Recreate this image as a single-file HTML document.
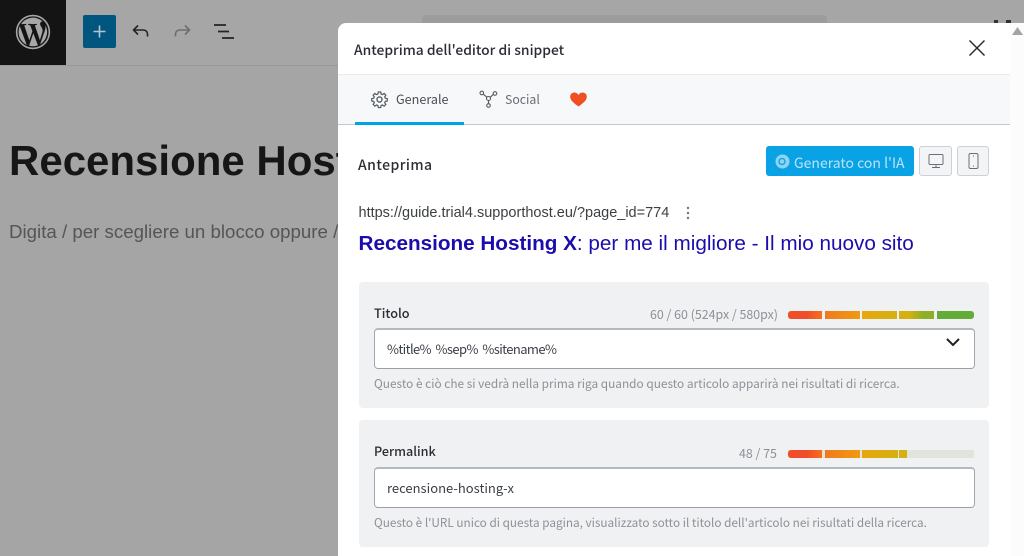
<!DOCTYPE html>
<html><head><meta charset="utf-8"><style>
html,body{margin:0;padding:0}
body{width:1024px;height:556px;overflow:hidden;position:relative;background:#a5a5a5;font-family:"Liberation Sans",sans-serif}
.a{position:absolute;white-space:nowrap}
.n{font-family:"Noto Sans CJK SC","Liberation Sans",sans-serif}
.box{position:absolute;background:#f0f1f3;border-radius:4px;left:359px;width:630px}
.inp{position:absolute;left:374px;width:601px;background:#fff;border:1px solid #a2a7ae;border-top-width:2px;border-color:#b4b8bf #a2a7ae #9a9fa6;border-radius:4px;box-sizing:border-box}
.seg{position:absolute;height:8px}
</style></head><body>
<div class="a" style="left:0;top:0;width:1024px;height:65px;background:#a6a6a6;border-bottom:1px solid #999"></div>
<div class="a" style="left:0;top:0;width:66px;height:65px;background:#141414"></div>
<svg class="a" style="left:15px;top:14px" width="36" height="36" viewBox="0 0 36 36"><circle cx="18" cy="18" r="16.4" fill="none" stroke="#a6a6a6" stroke-width="1.6"/><path d="M3.6 18c0 5.7 3.3 10.6 8.1 12.9L4.8 12.1A14.4 14.4 0 0 0 3.6 18zM27.7 17.3c0-1.8-.6-3-1.2-4-.7-1.200-1.400-2.200-1.400-3.400 0-1.300 1-2.500 2.400-2.500h.2A14.400 14.400 0 0 0 6 10.100h.9c1.500 0 3.800-.2 3.800-.2.800 0 .9 1.100.1 1.200 0 0-.8.100-1.600.1l5.100 15.200 3.100-9.200-2.200-6c-.8 0-1.500-.1-1.500-.1-.8 0-.7-1.200.1-1.200 0 0 2.300.2 3.700.2 1.500 0 3.800-.2 3.800-.2.800 0 .9 1.100.1 1.200 0 0-.8.100-1.600.1l5.100 15.100 1.400-4.700c.6-1.900 1.100-3.300 1.100-4.300zM18.300 19.300l-4.200 12.300a14.400 14.400 0 0 0 8.900-.2l-.1-.2zM30.400 11.300c.1.500.1 1 .1 1.500 0 1.500-.3 3.100-1.100 5.100l-4.300 12.500A14.400 14.400 0 0 0 30.400 11.300z" fill="#a6a6a6"/></svg>
<div class="a" style="left:83px;top:15px;width:33px;height:33px;background:#00567f;border-radius:2px"></div>
<svg class="a" style="left:83px;top:15px" width="33" height="33"><path d="M16.500 10.500v12M10.500 16.500h12" stroke="#b5c5cf" stroke-width="1.600"/></svg>
<svg class="a" style="left:130px;top:20px" width="22" height="22" fill="none" stroke="#242424" stroke-width="1.600"><path d="M17.500 16.500v-2.500a4 4 0 0 0-4-4H4M8 5.500L3.500 10 8 14.500"/></svg>
<svg class="a" style="left:171px;top:20px" width="22" height="22" fill="none" stroke="#6e6e6e" stroke-width="1.600"><path d="M4.500 16.500v-2.500a4 4 0 0 1 4-4H18M14 5.500L18.500 10 14 14.500"/></svg>
<svg class="a" style="left:213px;top:23px" width="22" height="16" stroke="#242424" stroke-width="1.700"><path d="M1 2h12M5 8.500h11M9 15h12"/></svg>
<div class="a" style="left:422px;top:15px;width:405px;height:33px;background:#9c9c9c;border-radius:4px"></div>
<div class="a" style="left:994px;top:20px;width:4px;height:3px;background:#333"></div>
<div class="a" style="left:1006px;top:20px;width:5px;height:3px;background:#333"></div>
<div class="a" style="left:9px;top:138px;font-size:42px;font-weight:700;color:#161616;line-height:46px">Recensione Hosting X</div>
<div class="a" style="left:9px;top:220px;font-size:18.700px;color:#555;line-height:24px">Digita / per scegliere un blocco oppure / per aggiungere</div>

<div class="a" style="left:338px;top:23px;width:686px;height:533px;background:#fff;border-radius:8px 0 0 0;overflow:hidden"></div>
<div class="a" style="left:1010px;top:23px;width:14px;height:533px;background:#fcfcfc"></div>
<svg class="a" style="left:1012px;top:27px" width="11" height="9"><path d="M5.500 0L11 8H0z" fill="#a3a3a3"/></svg>

<div class="a n" style="left:354px;top:39px;font-size:13.850px;font-weight:500;color:#2a2d33;line-height:21px">Anteprima dell'editor di snippet</div>
<svg class="a" style="left:968px;top:39px" width="18" height="18" stroke="#2a2d33" stroke-width="1.500"><path d="M1.500 1.500l15 15M16.500 1.500l-15 15"/></svg>

<div class="a" style="left:338px;top:74px;width:672px;height:49px;background:#f7f8f9;border-top:1px solid #e9ebee;border-bottom:1px solid #c3c8cf;box-sizing:content-box"></div>
<div class="a" style="left:355px;top:122px;width:109px;height:3px;background:#00a3e8"></div>
<svg class="a" style="left:370px;top:90px" width="19" height="19" viewBox="0 0 24 24" fill="none" stroke="#555b63" stroke-width="1.700"><circle cx="12" cy="12" r="3.200"/><path d="M10.300 2.500h3.400l.5 2.800 1.900.8 2.400-1.600 2.400 2.400-1.600 2.400.8 1.900 2.800.5v3.400l-2.800.5-.8 1.900 1.600 2.400-2.400 2.400-2.400-1.600-1.900.8-.5 2.800h-3.400l-.5-2.800-1.900-.8-2.400 1.600-2.400-2.400 1.600-2.400-.8-1.900-2.800-.5v-3.400l2.800-.5.8-1.900-1.600-2.400 2.400-2.400 2.400 1.600 1.900-.8z" transform="translate(12 12) scale(.9) translate(-12 -13)"/></svg>
<div class="a n" style="left:396px;top:89px;font-size:12.600px;color:#4a4f57;line-height:20px">Generale</div>
<svg class="a" style="left:479px;top:90px" width="19" height="19" fill="none" stroke="#555b63" stroke-width="1.100"><circle cx="2.800" cy="3" r="1.800"/><circle cx="16" cy="3.500" r="1.800"/><circle cx="9.500" cy="15.500" r="1.800"/><circle cx="9.500" cy="8.500" r="2"/><path d="M4.300 4.200l3.600 3M14.400 4.300l-3.200 3M9.500 10.500v3.200"/></svg>
<div class="a n" style="left:505px;top:89px;font-size:12.300px;color:#6a6f77;line-height:20px">Social</div>
<svg class="a" style="left:570px;top:92px" width="17" height="15" viewBox="0 0 17 15"><path d="M8.500 14.500C3 10.500.2 8 .2 4.700.2 2.300 2 .5 4.300.5 6 .5 7.600 1.400 8.500 3c.9-1.600 2.500-2.500 4.200-2.500 2.300 0 4.100 1.800 4.100 4.200 0 3.300-2.800 5.800-8.300 9.800z" fill="#f04e23"/></svg>

<div class="a n" style="left:358px;top:155px;font-size:14px;font-weight:500;color:#2a2d33;line-height:20px;letter-spacing:.45px">Anteprima</div>
<div class="a" style="left:766px;top:146px;width:148px;height:30px;background:#08a2e5;border-radius:3px"></div>
<svg class="a" style="left:775px;top:154px" width="15" height="15"><circle cx="7.500" cy="7.500" r="7" fill="#8fd3f2"/><circle cx="7" cy="7.500" r="3" fill="none" stroke="#08a2e5" stroke-width="1.300"/></svg>
<div class="a n" style="left:794px;top:153px;font-size:14px;color:#b9e4f8;line-height:21px">Generato con l'IA</div>
<div class="a" style="left:919px;top:146px;width:33px;height:30px;box-sizing:border-box;background:#f3f4f6;border:1px solid #ccd0d8;border-radius:3px"></div>
<svg class="a" style="left:928px;top:154px" width="16" height="14" fill="none" stroke="#6a6f77" stroke-width="1"><rect x="1" y=".5" width="14" height="10" rx="1"/><path d="M8 10.500v3M4 13.500h8"/></svg>
<div class="a" style="left:957px;top:146px;width:32px;height:30px;box-sizing:border-box;background:#f3f4f6;border:1px solid #ccd0d8;border-radius:3px"></div>
<svg class="a" style="left:968px;top:153px" width="11" height="16" fill="none" stroke="#6a6f77" stroke-width="1"><rect x="1" y=".5" width="9" height="15" rx="1.500"/><path d="M5 3h1M5 13h1"/></svg>

<div class="a" style="left:358.500px;top:204px;font-size:14.500px;color:#3c4043;line-height:18px">https://guide.trial4.supporthost.eu/?page_id=774</div>
<svg class="a" style="left:686px;top:206px" width="4" height="14" fill="#70757a"><circle cx="2" cy="2" r="1.200"/><circle cx="2" cy="7" r="1.200"/><circle cx="2" cy="12" r="1.200"/></svg>
<div class="a" style="left:358.500px;top:232px;font-size:20.700px;color:#1a0dab;line-height:24px"><b>Recensione Hosting X</b>: per me il migliore - Il mio nuovo sito</div>

<div class="box" style="top:282px;height:126px"></div>
<div class="a n" style="left:374px;top:303px;font-size:12.700px;font-weight:500;color:#2a2d33;line-height:20px">Titolo</div>
<div class="a n" style="left:650px;top:305px;font-size:12.400px;color:#8c9198;line-height:19px">60 / 60 (524px / 580px)</div>
<div class="seg" style="left:788px;top:311px;width:34px;background:linear-gradient(90deg,#f04e28 55%,#f2701f);border-radius:3px 0 0 3px"></div>
<div class="seg" style="left:825px;top:311px;width:35px;background:linear-gradient(90deg,#ef7a1e,#f09a12)"></div>
<div class="seg" style="left:862px;top:311px;width:35px;background:linear-gradient(90deg,#e8a60f,#d4b010)"></div>
<div class="seg" style="left:899px;top:311px;width:35px;background:linear-gradient(90deg,#d4b010 30%,#8fae28 70%,#90ad28)"></div>
<div class="seg" style="left:937px;top:311px;width:37px;background:#65ab38;border-radius:0 3px 3px 0"></div>
<div class="inp" style="top:328px;height:41px"></div>
<div class="a n" style="left:387px;top:339px;font-size:13px;color:#3a3f46;line-height:20px;letter-spacing:-.6px;word-spacing:2.200px">%title% %sep% %sitename%</div>
<svg class="a" style="left:945px;top:337px" width="16" height="11" fill="none" stroke="#1e2126" stroke-width="2"><path d="M2 2l6 6 6-6"/></svg>
<div class="a n" style="left:374px;top:375px;font-size:11.850px;color:#8c9198;line-height:17px">Questo è ciò che si vedrà nella prima riga quando questo articolo apparirà nei risultati di ricerca.</div>

<div class="box" style="top:420px;height:127px"></div>
<div class="a n" style="left:374px;top:441px;font-size:12.600px;font-weight:500;color:#2a2d33;line-height:20px">Permalink</div>
<div class="a n" style="left:739px;top:444px;font-size:12.400px;color:#8c9198;line-height:19px">48 / 75</div>
<div class="seg" style="left:788px;top:450px;width:186px;background:#e3e3de"></div>
<div class="seg" style="left:788px;top:450px;width:34px;background:linear-gradient(90deg,#f04e28 55%,#f2701f);border-radius:3px 0 0 3px"></div>
<div class="seg" style="left:825px;top:450px;width:35px;background:linear-gradient(90deg,#ef7a1e,#f09a12)"></div>
<div class="seg" style="left:862px;top:450px;width:36px;background:linear-gradient(90deg,#e8a60f,#d4b010)"></div>
<div class="seg" style="left:899px;top:450px;width:8px;background:#d4b010"></div>
<div class="inp" style="top:467px;height:41px"></div>
<div class="a n" style="left:387px;top:478px;font-size:13px;color:#3a3f46;line-height:20px">recensione-hosting-x</div>
<div class="a n" style="left:374px;top:514px;font-size:11.780px;color:#8c9198;line-height:17px">Questo è l'URL unico di questa pagina, visualizzato sotto il titolo dell'articolo nei risultati della ricerca.</div>
</body></html>
